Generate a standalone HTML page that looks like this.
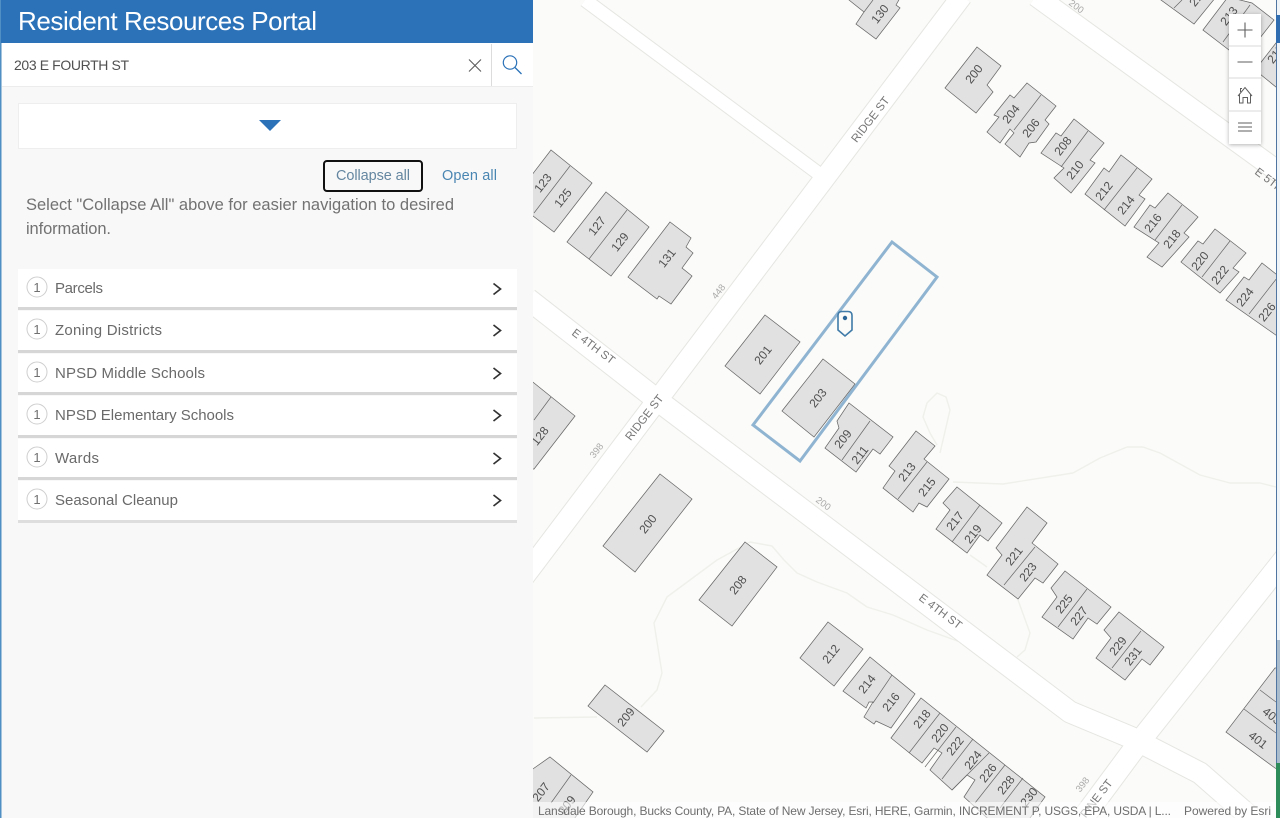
<!DOCTYPE html>
<html lang="en"><head><meta charset="utf-8"><title>Resident Resources Portal</title>
<style>
html,body{margin:0;padding:0;width:1280px;height:818px;overflow:hidden;background:#fbfbf9}
svg{display:block;font-family:"Liberation Sans",sans-serif}
.b polygon{fill:#e1e1e1;stroke:#686868;stroke-width:.7;stroke-linejoin:miter}
.b{filter:drop-shadow(.7px .7px 0 #b4b4b4)}
.d path{stroke:#686868;stroke-width:.7;fill:none}
.n text{font-size:12px;fill:#505050;text-anchor:middle;dominant-baseline:central}
.r text{fill:#777;text-anchor:middle;dominant-baseline:central;font-size:11.5px}
.g text{fill:#aaa;text-anchor:middle;dominant-baseline:central;font-size:9.5px}
.e path{fill:none;stroke:#e5e5e2;stroke-linejoin:round}
.w path{fill:none;stroke:#fff;stroke-linejoin:round}
.p path{fill:none;stroke:#efefeb;stroke-width:1.4;stroke-linejoin:round}
.lbl{font-size:15px;fill:#6a6a6a}
</style></head><body>
<svg width="1280" height="818" viewBox="0 0 1280 818" xmlns="http://www.w3.org/2000/svg">
<defs><clipPath id="mapc"><rect x="533" y="0" width="743" height="818"/></clipPath></defs>
<g clip-path="url(#mapc)">
<rect x="533" y="0" width="747" height="818" fill="#fbfbf9"/>
<g class="p">
<path d="M940 453L950 410L946 397L937 393L927 403L923 417L930 433L937 445"/>
<path d="M953 482L1003 484L1073 473L1100 458L1127 447L1143 447L1160 453L1200 475L1230 483L1260 483L1276 487"/>
<path d="M597 717L534 718"/>
<path d="M641 707L657 690L662 673L654 623L667 597L717 560L750 542L772 546L784 560L797 573L817 582L847 593L867 607L893 615L927 630L963 643"/>
<path d="M970 555L987 567"/>
<path d="M1018 600L1030 633L1025 650L1017 657"/>
</g>
<g class="e">
<path stroke-width="22" d="M962 -4L533 565L520 582"/>
<path stroke-width="15" d="M585 0L818 173"/>
<path stroke-width="23" d="M528 299L665 406L1070 712L1130 737L1200 773L1256 822"/>
<path stroke-width="23" d="M1290 552L1140 741L1080 822"/>
<path stroke-width="22" d="M1036 -4L1290 180"/>
</g>
<g class="w">
<path stroke-width="20" d="M962 -4L533 565L520 582"/>
<path stroke-width="13" d="M585 0L822 176"/>
<path stroke-width="21" d="M528 299L665 406L1070 712L1130 737L1200 773L1256 822"/>
<path stroke-width="21" d="M1290 552L1140 741L1080 822"/>
<path stroke-width="20" d="M1036 -4L1290 180"/>
</g>
<g class="b">
<polygon points="525,184 551,150 592,183 554,232 520,206"/>
<polygon points="606,192 649,227 611,276 567,242"/>
<polygon points="670,222 691,238 686,247 693,253 682,268 692,276 671,304 659,296 657,299 628,277"/>
<polygon points="849,0 864,12 856,24 876,39 900,8 896,5 900,-2 849,-2"/>
<polygon points="1150,-8 1194,24 1220,-8"/>
<polygon points="1203,30 1228,-3 1252,3 1274,20 1256,43 1240,55 1229,50"/>
<polygon points="1276,43 1255,70 1276,87 1285,87 1285,43"/>
<polygon points="977,47 1001,66 987,85 993,92 976,113 945,88"/>
<polygon points="1027,83 1056,106 1045,120 1049,124 1036,142 1029,143 1020,157 1005,144 1014,133 1010,129 1000,143 987,132 999,117 994,115 1010,95 1014,98"/>
<polygon points="1074,119 1104,143 1090,160 1095,163 1071,193 1054,178 1064,168 1041,153 1056,133 1061,136"/>
<polygon points="1121,155 1152,179 1139,195 1145,199 1125,226 1085,194 1104,168 1109,172"/>
<polygon points="1168,193 1198,217 1184,233 1189,237 1162,267 1147,257 1159,243 1134,227 1150,205 1155,208"/>
<polygon points="1215,229 1246,253 1233,268 1239,272 1220,293 1181,262 1198,241 1203,244"/>
<polygon points="1262,263 1290,285 1290,345 1226,300 1244,277 1249,280"/>
<polygon points="765,315 800,342 760,394 725,366"/>
<polygon points="823,359 855,384 814,437 782,411"/>
<polygon points="534,383 575,416 534,469 520,469 520,372"/>
<polygon points="660,474 692,499 635,572 603,546"/>
<polygon points="849,403 893,437 880,454 873,449 856,472 825,448 839,428 837,421"/>
<polygon points="916,431 935,446 924,459 949,479 927,507 919,503 913,512 883,488 895,471 889,466"/>
<polygon points="957,487 1002,523 988,541 980,535 967,553 936,529 950,510 943,503"/>
<polygon points="1027,507 1047,523 1032,543 1058,564 1043,583 1035,578 1018,599 987,575 1002,555 996,548"/>
<polygon points="1065,571 1111,607 1097,624 1088,618 1073,639 1042,617 1057,597 1051,588"/>
<polygon points="1119,612 1164,647 1150,665 1142,659 1125,680 1096,658 1111,638 1104,630"/>
<polygon points="828,622 863,649 834,686 800,658"/>
<polygon points="745,542 777,567 732,626 699,600"/>
<polygon points="605,685 664,731 647,752 588,706"/>
<polygon points="870,657 915,694 891,728 876,721 874,724 864,717 873,702 869,702 866,708 843,691"/>
<polygon points="921,698 1045,797 1025,825 995,825 964,797 975,780 967,775 952,790 930,770 942,753 934,748 922,763 891,738"/>
<polygon points="550,757 593,792 570,825 530,825 520,778"/>
<polygon points="1275,668 1290,668 1290,775 1275,768 1226,732"/>
</g>
<g class="d">
<path d="M570 166L534 213"/>
<path d="M627 210L589 259"/>
<path d="M864 12L873 0"/>
<path d="M1174 8L1182 0"/>
<path d="M1250 5L1223 42"/>
<path d="M1041 95L1014 130"/>
<path d="M1088 131L1061 167"/>
<path d="M1137 168L1104 210"/>
<path d="M1182 205L1155 240"/>
<path d="M1230 241L1202 277"/>
<path d="M1277 278L1249 314"/>
<path d="M551 397L534 420"/>
<path d="M870 421L842 460"/>
<path d="M927 462L898 499"/>
<path d="M980 505L952 542"/>
<path d="M1035 547L1004 585"/>
<path d="M1087 589L1058 627"/>
<path d="M1141 631L1112 668"/>
<path d="M892 675L873 703"/>
<path d="M940 713L909 753"/>
<path d="M956 727L925 767"/>
<path d="M973 739L942 779"/>
<path d="M989 753L952 790"/>
<path d="M1005 765L975 803"/>
<path d="M1023 778L1000 808"/>
<path d="M571 775L551 803"/>
<path d="M1244 709L1276 733"/>
<path d="M1260 690L1276 702"/>
</g>
<g class="n">
<text transform="translate(543,183) rotate(-52)">123</text>
<text transform="translate(563,198) rotate(-52)">125</text>
<text transform="translate(597,226) rotate(-52)">127</text>
<text transform="translate(620,242) rotate(-52)">129</text>
<text transform="translate(667,258) rotate(-52)">131</text>
<text transform="translate(880,14) rotate(-52)">130</text>
<text transform="translate(1198,-3) rotate(-52)">218</text>
<text transform="translate(1229,16) rotate(-52)">213</text>
<text transform="translate(1276,54) rotate(-52)">215</text>
<text transform="translate(974,74) rotate(-52)">200</text>
<text transform="translate(1011,114) rotate(-52)">204</text>
<text transform="translate(1031,128) rotate(-52)">206</text>
<text transform="translate(1063,146) rotate(-52)">208</text>
<text transform="translate(1075,170) rotate(-52)">210</text>
<text transform="translate(1104,191) rotate(-52)">212</text>
<text transform="translate(1126,205) rotate(-52)">214</text>
<text transform="translate(1153,223) rotate(-52)">216</text>
<text transform="translate(1172,239) rotate(-52)">218</text>
<text transform="translate(1200,261) rotate(-52)">220</text>
<text transform="translate(1220,275) rotate(-52)">222</text>
<text transform="translate(1245,297) rotate(-52)">224</text>
<text transform="translate(1267,312) rotate(-52)">226</text>
<text transform="translate(763,355) rotate(-52)">201</text>
<text transform="translate(818,398) rotate(-52)">203</text>
<text transform="translate(843,439) rotate(-52)">209</text>
<text transform="translate(860,455) rotate(-52)">211</text>
<text transform="translate(907,472) rotate(-52)">213</text>
<text transform="translate(927,487) rotate(-52)">215</text>
<text transform="translate(955,521) rotate(-52)">217</text>
<text transform="translate(973,534) rotate(-52)">219</text>
<text transform="translate(1014,556) rotate(-52)">221</text>
<text transform="translate(1028,572) rotate(-52)">223</text>
<text transform="translate(1064,604) rotate(-52)">225</text>
<text transform="translate(1079,616) rotate(-52)">227</text>
<text transform="translate(1118,646) rotate(-52)">229</text>
<text transform="translate(1133,656) rotate(-52)">231</text>
<text transform="translate(540,436) rotate(-52)">128</text>
<text transform="translate(648,524) rotate(-52)">200</text>
<text transform="translate(738,585) rotate(-52)">208</text>
<text transform="translate(831,654) rotate(-52)">212</text>
<text transform="translate(867,684) rotate(-52)">214</text>
<text transform="translate(891,702) rotate(-52)">216</text>
<text transform="translate(626,717) rotate(-52)">209</text>
<text transform="translate(541,792) rotate(-52)">207</text>
<text transform="translate(567,805) rotate(-52)">209</text>
<text transform="translate(922,719) rotate(-52)">218</text>
<text transform="translate(940,733) rotate(-52)">220</text>
<text transform="translate(955,746) rotate(-52)">222</text>
<text transform="translate(973,760) rotate(-52)">224</text>
<text transform="translate(988,773) rotate(-52)">226</text>
<text transform="translate(1006,785) rotate(-52)">228</text>
<text transform="translate(1029,797) rotate(-52)">230</text>
<text transform="translate(1258,740) rotate(38)">401</text>
<text transform="translate(1272,716) rotate(38)">403</text>
</g>
<g class="r">
<text transform="translate(871,120) rotate(-52)">RIDGE ST</text>
<text transform="translate(645,418) rotate(-52)">RIDGE ST</text>
<text transform="translate(593,347) rotate(37)">E 4TH ST</text>
<text transform="translate(940,612) rotate(37)">E 4TH ST</text>
<text transform="translate(1276,186) rotate(37)">E 5TH ST</text>
<text transform="translate(1097,799) rotate(-52)">PINE ST</text>
</g>
<g class="g">
<text transform="translate(719,292) rotate(-52)">448</text>
<text transform="translate(597,451) rotate(-52)">398</text>
<text transform="translate(823,504) rotate(37)">200</text>
<text transform="translate(1076,7) rotate(37)">200</text>
<text transform="translate(1083,785) rotate(-52)">398</text>
</g>
<polygon points="892,242 937,277 800,461 753,425" fill="none" stroke="#8fb4d2" stroke-width="3" stroke-linejoin="miter"/>
<path d="M838 315.5Q838 311.5 842 311.5H848Q852 311.5 852 315.5V330L845 336L838 330Z" fill="#fbfbf9" stroke="#3f7aa8" stroke-width="1.6"/>
<circle cx="845" cy="318" r="2.2" fill="#2b6496"/>
<rect x="533" y="802" width="743" height="16" fill="#fff" fill-opacity=".6"/>
<text x="538" y="815" font-size="12" fill="#6e6e6e" textLength="633" lengthAdjust="spacing">Lansdale Borough, Bucks County, PA, State of New Jersey, Esri, HERE, Garmin, INCREMENT P, USGS, EPA, USDA | L...</text>
<text x="1184" y="815" font-size="12" fill="#6e6e6e" textLength="87" lengthAdjust="spacing">Powered by Esri</text>
<!-- zoom controls -->
<g style="filter:drop-shadow(0 1px 2px rgba(0,0,0,.3))"><rect x="1229" y="14" width="32" height="130" fill="#fff"/></g>
<path d="M1229 46H1261M1229 78H1261M1229 111H1261" stroke="#d9d9d9" stroke-width="1"/>
<path d="M1245 22.5V37.5M1237.5 30H1252.5M1237.5 62H1252.5" stroke="#5f5f5f" stroke-width="1.1" fill="none"/>
<path d="M1238 96L1245 87.5L1252 96M1239.5 94.5V103H1243V97.5H1247.5V103H1250.5V94.5M1240.5 92V88.5H1242" stroke="#5f5f5f" stroke-width="1" fill="none"/>
<path d="M1238 123H1252M1238 127H1252M1238 131H1252" stroke="#5f5f5f" stroke-width="1" fill="none"/>
</g>
<!-- right edge strip -->
<rect x="1276" y="0" width="4" height="818" fill="#eef4f8"/>
<rect x="1276" y="0" width="1" height="818" fill="#4f75a0"/>
<rect x="1276" y="15" width="4" height="28" fill="#2f6db0"/>
<rect x="1277" y="640" width="3" height="123" fill="#a9bccd"/>
<rect x="1276" y="763" width="4" height="55" fill="#2e8b5a"/>
<!-- left panel -->
<rect x="0" y="0" width="533" height="818" fill="#f8f8f8"/>
<rect x="0" y="0" width="1.5" height="818" fill="#4f8fc4"/>
<rect x="1" y="0" width="532" height="43" fill="#2b72b8"/>
<text x="18" y="30" font-size="26" fill="#fff" textLength="299" lengthAdjust="spacing">Resident Resources Portal</text>
<rect x="2" y="43" width="531" height="43" fill="#fff"/>
<rect x="2" y="86" width="531" height="1" fill="#ececec"/>
<rect x="491" y="44" width="1" height="42" fill="#dcdcdc"/>
<text x="14" y="70" font-size="14" fill="#505050" textLength="115" lengthAdjust="spacing">203 E FOURTH ST</text>
<path d="M469 59.5L481 71.5M481 59.5L469 71.5" stroke="#5c5c5c" stroke-width="1.1" fill="none"/>
<circle cx="510" cy="62.5" r="6.7" fill="none" stroke="#2b72b8" stroke-width="1.2"/>
<path d="M515 67.5L521.5 74" stroke="#2b72b8" stroke-width="1.3"/>
<rect x="18.500" y="103.500" width="498" height="45" fill="#fff" stroke="#eeeeee"/>
<polygon points="259,120 281,120 270,131" fill="#2b72b8"/>
<rect x="324" y="161" width="98" height="30" rx="3" fill="#f8f8f8" stroke="#111" stroke-width="2"/>
<text x="336" y="180" font-size="14.500" fill="#6486a0" textLength="74" lengthAdjust="spacing">Collapse all</text>
<text x="442" y="180" font-size="14.500" fill="#4a86b2" textLength="55" lengthAdjust="spacing">Open all</text>
<text x="26" y="210" font-size="16.500" fill="#727272" textLength="428" lengthAdjust="spacing">Select "Collapse All" above for easier navigation to desired</text>
<text x="26" y="234" font-size="16.500" fill="#727272" textLength="85" lengthAdjust="spacing">information.</text>
<!-- list -->
<g>
<rect x="18" y="269" width="499" height="38" fill="#fff"/><rect x="18" y="307" width="499" height="3" fill="#d6d6d6"/>
<rect x="18" y="311" width="499" height="39" fill="#fff"/><rect x="18" y="350" width="499" height="3" fill="#d6d6d6"/>
<rect x="18" y="354" width="499" height="38" fill="#fff"/><rect x="18" y="392" width="499" height="3" fill="#d6d6d6"/>
<rect x="18" y="396" width="499" height="39" fill="#fff"/><rect x="18" y="435" width="499" height="3" fill="#d6d6d6"/>
<rect x="18" y="439" width="499" height="38" fill="#fff"/><rect x="18" y="477" width="499" height="3" fill="#d6d6d6"/>
<rect x="18" y="481" width="499" height="39" fill="#fff"/><rect x="18" y="520" width="499" height="3" fill="#dedede"/>
</g>
<g fill="#fff" stroke="#cfcfcf" stroke-width="1">
<circle cx="37" cy="287" r="10"/><circle cx="37" cy="329" r="10"/><circle cx="37" cy="372" r="10"/><circle cx="37" cy="414" r="10"/><circle cx="37" cy="457" r="10"/><circle cx="37" cy="499" r="10"/>
</g>
<g font-size="13" fill="#707070" text-anchor="middle">
<text x="37" y="292">1</text><text x="37" y="334">1</text><text x="37" y="377">1</text><text x="37" y="419">1</text><text x="37" y="462">1</text><text x="37" y="504">1</text>
</g>
<text class="lbl" x="55" y="293" textLength="48" lengthAdjust="spacing">Parcels</text>
<text class="lbl" x="55" y="335" textLength="107" lengthAdjust="spacing">Zoning Districts</text>
<text class="lbl" x="55" y="378" textLength="150" lengthAdjust="spacing">NPSD Middle Schools</text>
<text class="lbl" x="55" y="420" textLength="179" lengthAdjust="spacing">NPSD Elementary Schools</text>
<text class="lbl" x="55" y="463" textLength="44" lengthAdjust="spacing">Wards</text>
<text class="lbl" x="55" y="505" textLength="123" lengthAdjust="spacing">Seasonal Cleanup</text>
<g fill="none" stroke="#333" stroke-width="1.700">
<path d="M493.500 283.500L500.500 289L493.500 294.500"/>
<path d="M493.500 325L500.500 330.500L493.500 336"/>
<path d="M493.500 368L500.500 373.500L493.500 379"/>
<path d="M493.500 410L500.500 415.500L493.500 421"/>
<path d="M493.500 453L500.500 458.500L493.500 464"/>
<path d="M493.500 495L500.500 500.500L493.500 506"/>
</g>
</svg>
</body></html>
